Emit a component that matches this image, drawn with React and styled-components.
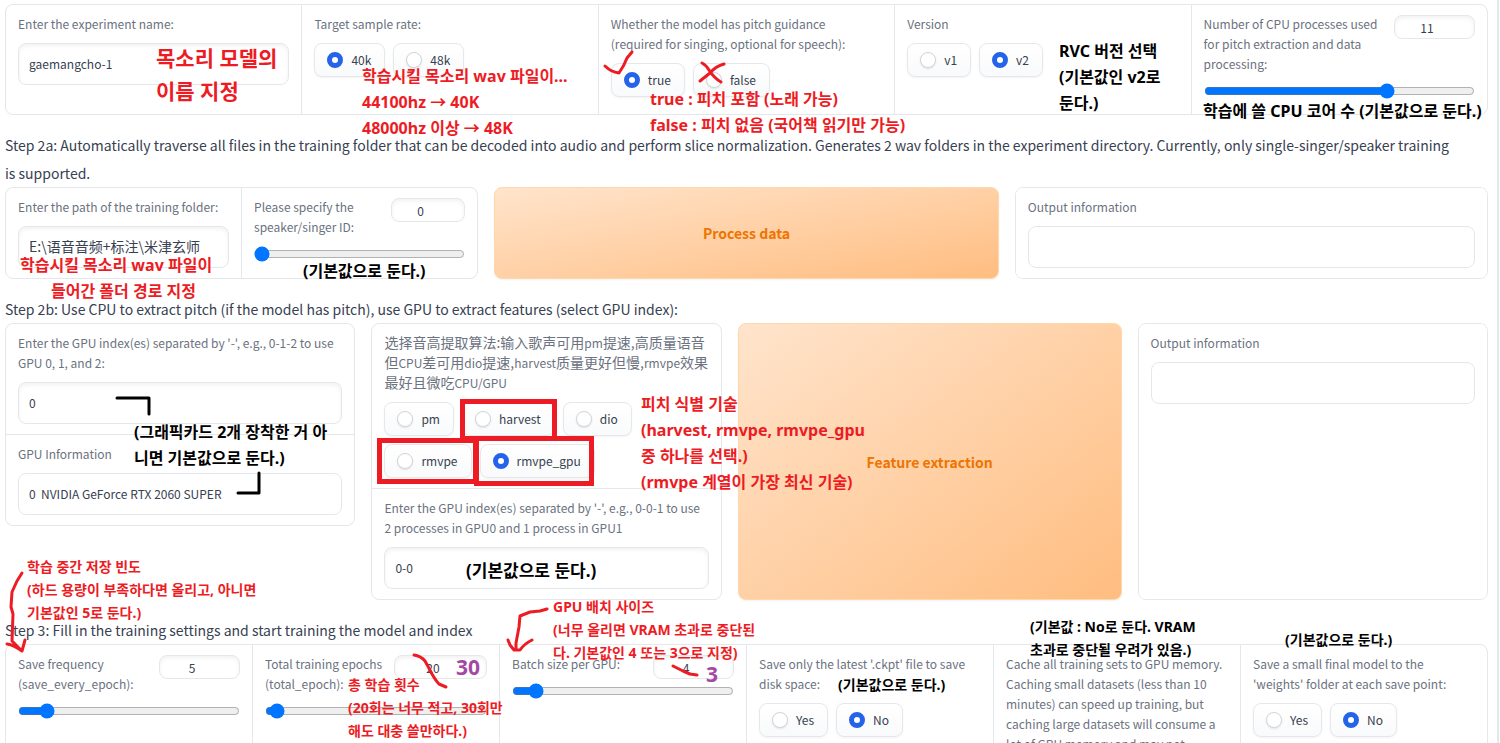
import React, { useId, useState } from 'react';
import styled, { createGlobalStyle, css } from 'styled-components';

const GlobalStyle = createGlobalStyle`
  :root {
    --ui-font: 'Noto Sans CJK SC', sans-serif;
    --note-font: 'Noto Sans', 'Noto Sans CJK KR', sans-serif;
    --border: #e5e7eb;
    --label: #6b7280;
    --text: #374151;
    --red: #ed1c24;
    --purple: #a349a4;
    --fz-label: 12px;
    --fz-input: 12px;
    --fz-step: 14px;
  }

  *,
  *:before,
  *:after {
    box-sizing: border-box;
  }

  body {
    margin: 0;
    background: #fff;
    color: var(--text);
    font-family: var(--ui-font);
  }
`;

const StyledPage = styled.main`
  position: relative;
  margin-right: 1px;
  padding: 4px 9px 24px 5px;
  border-right: 2px solid var(--border);
`;

const StyledStep = styled.p`
  margin: 16px 0 0;
  padding-right: 32px;
  font-size: var(--fz-step);
  line-height: 28px;
`;

const StyledRow = styled.div`
  display: grid;
  grid-template-columns: ${({ $columns }) => $columns};
  gap: 16px;
`;

const StyledGroup = styled.div`
  display: grid;
  grid-template-columns: repeat(${({ $count }) => $count || 1}, minmax(0, 1fr));
  gap: 1px;
  border: 1px solid var(--border);
  border-radius: 8px;
  background: var(--border);
  overflow: hidden;
`;

const StyledBlock = styled.div`
  display: flex;
  flex-direction: column;
  gap: 9px;
  min-width: 0;
  padding: 9px 12px 10px;
  background: #fff;
`;

const labelText = css`
  color: var(--label);
  font-size: var(--fz-label);
  line-height: 20px;
  white-space: pre-line;
`;

const StyledLabel = styled.label`
  ${labelText}
`;

const StyledFieldset = styled.fieldset`
  min-width: 0;
  margin: 0;
  padding: 0;
  border: 0;

  legend {
    ${labelText}
    margin-bottom: 9px;
    padding: 0;
  }
`;

const StyledHan = styled.span`
  font-size: 14px;
  line-height: 1;
`;

const StyledInput = styled.input`
  width: 100%;
  height: 42px;
  padding: 0 10px 2px;
  border: 1px solid var(--border);
  border-radius: 8px;
  background: #fff;
  box-shadow: ${({ readOnly }) => (readOnly ? 'none' : 'inset 0 2px 4px rgba(0, 0, 0, 0.06)')};
  color: var(--text);
  font-family: var(--ui-font);
  font-size: ${({ $han }) => ($han ? '14px' : 'var(--fz-input)')};
  outline: 0;
`;

const StyledSliderHead = styled.div`
  display: flex;
  align-items: flex-start;
  justify-content: space-between;
  gap: 8px;
`;

const StyledNumber = styled.input`
  flex: none;
  width: ${({ $width }) => $width}px;
  height: 24px;
  margin: 1px 0 -5px;
  padding: 0 8px;
  border: 1px solid var(--border);
  border-radius: 8px;
  background: #fff;
  box-shadow: inset 0 2px 4px rgba(0, 0, 0, 0.06);
  color: var(--text);
  font-family: var(--ui-font);
  font-size: var(--fz-input);
  text-align: center;
  outline: 0;
`;

const StyledRange = styled.input`
  height: 16px;
  margin: 0 0 5px;
`;

const StyledOptions = styled.div`
  display: flex;
  flex-wrap: wrap;
  gap: 8px;
`;

const StyledOption = styled.label`
  display: flex;
  align-items: center;
  gap: 8px;
  height: 34px;
  padding: 0 13px 0 12px;
  border: 1px solid var(--border);
  border-radius: 8px;
  background: linear-gradient(to top, #f9fafb, #fff);
  box-shadow: 0 1px 2px rgba(0, 0, 0, 0.05);
  color: var(--text);
  font-size: var(--fz-input);
  line-height: 20px;

  input {
    appearance: none;
    flex: none;
    width: 16px;
    height: 16px;
    margin: 0;
    border: 1px solid #d1d5db;
    border-radius: 50%;
    background: #fff;
    box-shadow: 0 1px 2px rgba(0, 0, 0, 0.1);

    &:checked {
      border: 5px solid #2563eb;
      box-shadow: none;
    }
  }
`;

const StyledPrimaryButton = styled.button`
  border: 1px solid #fed7aa;
  border-radius: 8px;
  background: linear-gradient(to bottom right, #ffe4cc, #ffbd80);
  box-shadow: 0 1px 2px rgba(0, 0, 0, 0.05);
  color: #ee7400;
  font-family: var(--ui-font);
  font-size: 14px;
  font-weight: 700;
`;

const StyledNotes = styled.div`
  position: absolute;
  inset: 0;
  pointer-events: none;

  svg {
    position: absolute;
    top: 0;
    left: 0;
    width: 100%;
    height: 100%;
    fill: none;
    stroke-linecap: round;
    stroke-linejoin: round;
  }
`;

const noteSizes = {
  small: { font: 14, line: 23 },
  medium: { font: 16, line: 26 },
  regular: { font: 17, line: 26 },
  large: { font: 21, line: 33 },
};

const StyledNote = styled.p`
  position: absolute;
  top: ${({ $y }) => $y}px;
  left: ${({ $x }) => $x}px;
  margin: 0;
  color: ${({ $color }) => $color || 'var(--red)'};
  font-family: var(--note-font);
  font-size: ${({ $size }) => noteSizes[$size].font}px;
  font-weight: 700;
  line-height: ${({ $size }) => noteSizes[$size].line}px;
  white-space: pre;
`;

const notes = [
  { x: 156, y: 42, size: 'large', text: '목소리 모델의\n이름 지정' },
  { x: 362, y: 63, size: 'medium', text: '학습시킬 목소리 wav 파일이...\n44100hz → 40K\n48000hz 이상 → 48K' },
  { x: 650, y: 86, size: 'medium', text: 'true : 피치 포함 (노래 가능)\nfalse : 피치 없음 (국어책 읽기만 가능)' },
  { x: 1059, y: 38, size: 'medium', color: '#000', text: 'RVC 버전 선택\n(기본값인 v2로\n둔다.)' },
  { x: 1203, y: 98, size: 'medium', color: '#000', text: '학습에 쓸 CPU 코어 수 (기본값으로 둔다.)' },
  { x: 20, y: 252, size: 'medium', text: '학습시킬 목소리 wav 파일이' },
  { x: 51, y: 278, size: 'medium', text: '들어간 폴더 경로 지정' },
  { x: 303, y: 258, size: 'medium', color: '#000', text: '(기본값으로 둔다.)' },
  { x: 134, y: 419, size: 'medium', color: '#000', text: '(그래픽카드 2개 장착한 거 아\n니면 기본값으로 둔다.)' },
  {
    x: 641,
    y: 391,
    size: 'medium',
    text: '피치 식별 기술\n(harvest, rmvpe, rmvpe_gpu\n중 하나를 선택.)\n(rmvpe 계열이 가장 최신 기술)',
  },
  { x: 466, y: 558, size: 'regular', color: '#000', text: '(기본값으로 둔다.)' },
  { x: 27, y: 555, size: 'small', text: '학습 중간 저장 빈도\n(하드 용량이 부족하다면 올리고, 아니면\n기본값인 5로 둔다.)' },
  { x: 553, y: 595, size: 'small', text: 'GPU 배치 사이즈\n(너무 올리면 VRAM 초과로 중단된\n다. 기본값인 4 또는 3으로 지정)' },
  { x: 348, y: 673, size: 'small', text: '총 학습 횟수\n(20회는 너무 적고, 30회만\n해도 대충 쓸만하다.)' },
  { x: 456, y: 651, size: 'large', color: 'var(--purple)', text: '30' },
  { x: 706, y: 658, size: 'large', color: 'var(--purple)', text: '3' },
  { x: 838, y: 673, size: 'small', color: '#000', text: '(기본값으로 둔다.)' },
  { x: 1030, y: 615, size: 'small', color: '#000', text: '(기본값 : No로 둔다. VRAM\n초과로 중단될 우려가 있음.)' },
  { x: 1285, y: 628, size: 'small', color: '#000', text: '(기본값으로 둔다.)' },
];

const TextField = ({ label, value, readOnly, han }) => {
  const id = useId();
  const [text, setText] = useState(value || '');

  return (
    <StyledBlock>
      <StyledLabel htmlFor={id}>{label}</StyledLabel>
      <StyledInput
        id={id}
        type="text"
        value={text}
        readOnly={readOnly}
        $han={han}
        onChange={e => setText(e.target.value)}
      />
    </StyledBlock>
  );
};

const RadioField = ({ label, options, value }) => {
  const name = useId();
  const [selected, setSelected] = useState(value);

  return (
    <StyledBlock>
      <StyledFieldset>
        <legend>{label}</legend>
        <StyledOptions>
          {options.map(option => (
            <StyledOption key={option}>
              <input
                type="radio"
                name={name}
                checked={selected === option}
                onChange={() => setSelected(option)}
              />
              {option}
            </StyledOption>
          ))}
        </StyledOptions>
      </StyledFieldset>
    </StyledBlock>
  );
};

const SliderField = ({ label, min = 0, max, value, numberWidth = 81 }) => {
  const id = useId();
  const [amount, setAmount] = useState(value);
  const onChange = e => setAmount(e.target.value);

  return (
    <StyledBlock>
      <StyledSliderHead>
        <StyledLabel htmlFor={id}>{label}</StyledLabel>
        <StyledNumber
          id={id}
          type="number"
          min={min}
          max={max}
          value={amount}
          $width={numberWidth}
          onChange={onChange}
        />
      </StyledSliderHead>
      <StyledRange
        type="range"
        aria-label={label}
        min={min}
        max={max}
        value={amount}
        onChange={onChange}
      />
    </StyledBlock>
  );
};

const Notes = () => (
  <StyledNotes>
    <svg aria-hidden="true">
      <g stroke="#000" strokeWidth="3">
        <path d="M117 398H149V414" />
        <path d="M259 473V493H238" />
      </g>
      <g stroke="var(--red)" strokeWidth="3">
        <path d="M605 66Q611 72 619 73Q624 66 627 58L632 52" />
        <path d="M702 63Q706 65 709 70Q714 78 721 82M724 64Q716 66 710 73L700 81" />
        <g strokeWidth="5" strokeLinejoin="miter">
          <rect x="462.5" y="401.5" width="92" height="37" />
          <rect x="379.5" y="440.5" width="96" height="41" />
          <rect x="476.5" y="438.5" width="115" height="45" />
        </g>
        <path d="M22 573L17 581L12 592L11 607L13 614L12 641L22 651M7 644Q14 645 22 651M25 640L22 651" />
        <path d="M547 609L540 611L530 612L520 616L519 627L516 643V649M508 640L510 645L514 650H520Q524 644 532 640" />
        <path d="M414 655Q421 656 425 661Q429 668 432 674Q436 681 439 684L446 687" />
        <path d="M673 666L683 671L690 674L697 675" />
      </g>
    </svg>
    {notes.map(({ x, y, size, color, text }) => (
      <StyledNote key={`${x}-${y}`} $x={x} $y={y} $size={size} $color={color}>
        {text}
      </StyledNote>
    ))}
  </StyledNotes>
);

const pitchLabel = (
  <>
    <StyledHan>选择音高提取算法:输入歌声可用</StyledHan>pm<StyledHan>提速,高质量语音但</StyledHan>CPU
    <StyledHan>差可用</StyledHan>dio<StyledHan>提速,</StyledHan>harvest
    <StyledHan>质量更好但慢,</StyledHan>rmvpe<StyledHan>效果最好且微吃</StyledHan>CPU/GPU
  </>
);

const App = () => (
  <>
    <GlobalStyle />
    <StyledPage>
      <StyledGroup $count={5}>
        <TextField label="Enter the experiment name:" value="gaemangcho-1" />
        <RadioField label="Target sample rate:" options={['40k', '48k']} value="40k" />
        <RadioField
          label={
            'Whether the model has pitch guidance\n(required for singing, optional for speech):'
          }
          options={['true', 'false']}
          value="true"
        />
        <RadioField label="Version" options={['v1', 'v2']} value="v2" />
        <SliderField
          label="Number of CPU processes used for pitch extraction and data processing:"
          max={16}
          value={11}
        />
      </StyledGroup>

      <StyledStep>
        Step 2a: Automatically traverse all files in the training folder that can be decoded into
        audio and perform slice normalization. Generates 2 wav folders in the experiment directory.
        Currently, only single-singer/speaker training is supported.
      </StyledStep>

      <StyledRow $columns="15fr 16fr 15fr">
        <StyledGroup $count={2}>
          <TextField
            label="Enter the path of the training folder:"
            value="E:\语音音频+标注\米津玄师"
            han
          />
          <SliderField
            label="Please specify the speaker/singer ID:"
            max={4}
            value={0}
            numberWidth={74}
          />
        </StyledGroup>
        <StyledPrimaryButton type="button">Process data</StyledPrimaryButton>
        <StyledGroup>
          <TextField label="Output information" readOnly />
        </StyledGroup>
      </StyledRow>

      <StyledStep>
        Step 2b: Use CPU to extract pitch (if the model has pitch), use GPU to extract features
        (select GPU index):
      </StyledStep>

      <StyledRow $columns="21fr 21fr 23fr 21fr">
        <div>
          <StyledGroup>
            <TextField
              label="Enter the GPU index(es) separated by '-', e.g., 0-1-2 to use GPU 0, 1, and 2:"
              value="0"
            />
            <TextField label="GPU Information" value="0  NVIDIA GeForce RTX 2060 SUPER" readOnly />
          </StyledGroup>
        </div>
        <StyledGroup>
          <RadioField
            label={pitchLabel}
            options={['pm', 'harvest', 'dio', 'rmvpe', 'rmvpe_gpu']}
            value="rmvpe_gpu"
          />
          <TextField
            label="Enter the GPU index(es) separated by '-', e.g., 0-0-1 to use 2 processes in GPU0 and 1 process in GPU1"
            value="0-0"
          />
        </StyledGroup>
        <StyledPrimaryButton type="button">Feature extraction</StyledPrimaryButton>
        <StyledGroup>
          <TextField label="Output information" readOnly />
        </StyledGroup>
      </StyledRow>

      <StyledStep>
        Step 3: Fill in the training settings and start training the model and index
      </StyledStep>

      <StyledGroup $count={6}>
        <SliderField label="Save frequency (save_every_epoch):" max={50} value={5} />
        <SliderField
          label="Total training epochs (total_epoch):"
          min={2}
          max={1000}
          value={20}
          numberWidth={93}
        />
        <SliderField label="Batch size per GPU:" min={1} max={40} value={4} />
        <RadioField
          label="Save only the latest '.ckpt' file to save disk space:"
          options={['Yes', 'No']}
          value="No"
        />
        <RadioField
          label="Cache all training sets to GPU memory. Caching small datasets (less than 10 minutes) can speed up training, but caching large datasets will consume a lot of GPU memory and may not provide much speed improvement:"
          options={['Yes', 'No']}
          value="No"
        />
        <RadioField
          label="Save a small final model to the 'weights' folder at each save point:"
          options={['Yes', 'No']}
          value="No"
        />
      </StyledGroup>
      <Notes />
    </StyledPage>
  </>
);

export default App;
